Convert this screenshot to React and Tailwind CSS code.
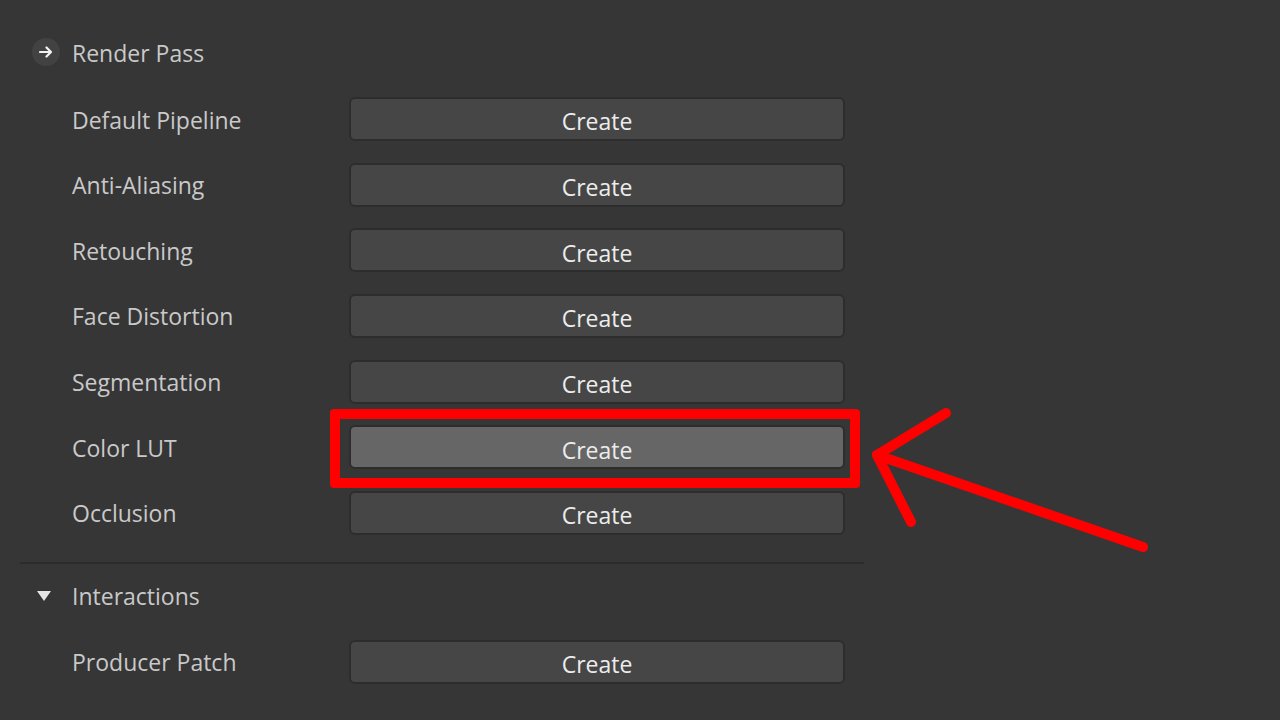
import { useState } from "react";

const renderRows = [
  "Default Pipeline",
  "Anti-Aliasing",
  "Retouching",
  "Face Distortion",
  "Segmentation",
  "Color LUT",
  "Occlusion",
];

function Row({ label, active }) {
  return (
    <div className="flex items-center h-[44px]">
      <span className="w-[329px] pl-[52px] pt-[2px] text-[23px] font-medium text-[#c9c9c9] leading-none">{label}</span>
      <button
        className={`w-[496px] h-[44px] rounded-[6px] border-2 border-[#2d2d2d] text-[23px] font-medium text-[#ececec] pt-[5px] ${
          active ? "bg-[#666666]" : "bg-[#464646]"
        }`}
      >
        Create
      </button>
    </div>
  );
}

export default function App() {
  const [active] = useState("Color LUT");

  return (
    <div
      className="relative w-[1280px] h-[720px] overflow-hidden bg-[#363636]"
      style={{ fontFamily: '"Open Sans", "Noto Sans", sans-serif' }}
    >
      <div className="w-[844px] ml-[20px] pt-[38px]">
        {/* RENDER PASS */}
        <div className="flex items-center h-[28px]">
          <div className="w-[28px] h-[28px] ml-[12px] rounded-full bg-[#424242] flex items-center justify-center">
            <svg width="14" height="12" viewBox="0 0 14 12">
              <path d="M1 6h11M7.5 1.5L12 6l-4.5 4.5" stroke="#f2f2f2" strokeWidth="2.2" fill="none" strokeLinecap="round" strokeLinejoin="round" />
            </svg>
          </div>
          <span className="ml-[12px] pt-[2px] text-[23px] font-medium text-[#c9c9c9] leading-none">Render Pass</span>
        </div>

        <div className="flex flex-col gap-[21.67px] mt-[31px]">
          {renderRows.map((r) => (
            <Row key={r} label={r} active={r === active} />
          ))}
        </div>

        <div className="h-[2px] bg-[#2b2b2b] mt-[27px]" />

        {/* INTERACTIONS */}
        <div className="flex items-center h-[28px] mt-[18px]">
          <svg className="ml-[17px]" width="14" height="10" viewBox="0 0 14 10">
            <path d="M0 0h14L7 10z" fill="#e6e6e6" />
          </svg>
          <span className="ml-[21px] pt-[2px] text-[23px] font-medium text-[#c9c9c9] leading-none">Interactions</span>
        </div>

        <div className="mt-[30px]">
          <Row label="Producer Patch" />
        </div>
      </div>

      {/* annotation */}
      <div className="absolute left-[330px] top-[409px] w-[530px] h-[79px] border-[10px] border-[#ff0000] rounded-[4px]" />
      <svg className="absolute left-0 top-0" width="1280" height="720">
        <g stroke="#ff0000" strokeWidth="10" strokeLinecap="round" strokeLinejoin="round" fill="none">
          <path d="M946 413L877 455L911 522" />
          <path d="M877 455L1143 547" />
        </g>
      </svg>
    </div>
  );
}
